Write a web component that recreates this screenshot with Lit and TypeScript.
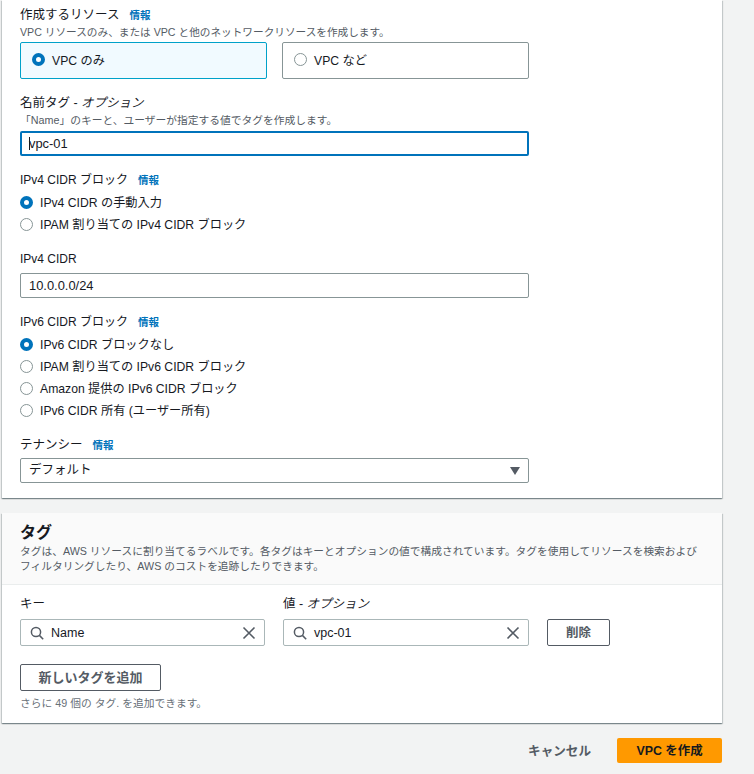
import { LitElement, html, css } from "lit";
import { customElement } from "lit/decorators.js";

const search = html`<svg class="ic" width="14" height="14" viewBox="0 0 14 14" fill="none" stroke="#545b64" stroke-width="1.5"><circle cx="6" cy="6" r="4.6"/><path d="M9.4 9.4 13.2 13.2"/></svg>`;
const cross = html`<svg class="ic" width="14" height="14" viewBox="0 0 14 14" fill="none" stroke="#545b64" stroke-width="1.6"><path d="M1.5 1.5l11 11M12.5 1.5l-11 11"/></svg>`;

@customElement("app-root")
export class AppRoot extends LitElement {
  static styles = css`
    :host { display: block; width: 754px; height: 774px; overflow: hidden; background: #f2f3f3; color: #16191f;
      font-family: "Liberation Sans", "Noto Sans CJK JP", sans-serif; font-size: 12.2px; }
    * { box-sizing: border-box; }
    .page { padding-left: 2px; width: 722px; }
    .card { background: #fff; width: 720px; box-shadow: 0 1px 1px 0 rgba(0,28,36,.3), 1px 1px 1px 0 rgba(0,28,36,.15), -1px 1px 1px 0 rgba(0,28,36,.15); }
    .main { height: 498px; padding: 7px 18px 0; }
    .label { height: 16px; line-height: 16px; display: flex; gap: 10px; white-space: nowrap; font-size: 12.5px; }
    .label.lat { font-size: 12px; }
    .label i { font-style: italic; }
    .info { color: #0073bb; font-size: 10.5px; font-weight: 700; }
    .desc { margin-top: 1px; height: 16px; line-height: 16px; font-size: 10.75px; color: #545b64; white-space: nowrap; }
    .desc.first { font-size: 10.65px; }
    .tiles { display: flex; gap: 15px; width: 509px; margin-top: 2px; }
    .tile { flex: 1; height: 37px; padding-bottom: 2px; border: 1px solid #879596; border-radius: 2px; display: flex; align-items: center; gap: 7px; padding-left: 11px; }
    .tile.on { border-color: #00a1c9; background: #f1faff; }
    .radio { width: 13px; height: 13px; flex: none; border-radius: 50%; border: 1px solid #879596; background: #fff; }
    .radio.on { border: 4px solid #0073bb; }
    .input { width: 509px; height: 25px; line-height: 23px; border: 1px solid #879596; border-radius: 2px; background: #fff; padding-left: 8px; font-size: 12.9px; }
    .input.focus { border: 2px solid #0073bb; line-height: 21px; padding-left: 7px; margin-top: 3px; }
    .caret { display: inline-block; width: 1px; height: 13px; background: #16191f; vertical-align: -2px; margin-right: -1px; }
    .radios { display: flex; flex-direction: column; margin-top: 3px; }
    .opt { height: 22px; display: flex; align-items: center; gap: 7px; white-space: nowrap; }
    .select { display: flex; align-items: center; justify-content: space-between; padding-right: 8px; font-size: 12.5px; }
    .arrow { width: 0; height: 0; border-left: 5px solid transparent; border-right: 5px solid transparent; border-top: 8px solid #545b64; margin-top: 1px; }
    .m-name { margin-top: 16px; }
    .m-v4 { margin-top: 16px; }
    .m-v4c { margin-top: 16px; }
    .m-v6 { margin-top: 16px; }
    .m-ten { margin-top: 16px; }
    .gap-s { margin-top: 6px; }
    .gap-xs { margin-top: 5px; }
    .tags { margin-top: 15px; height: 210px; }
    .head { height: 72px; background: #fafafa; border-bottom: 1px solid #eaeded; padding: 9px 18px 0; }
    .head h2 { margin: 0; height: 21px; line-height: 21px; font-size: 16px; font-weight: 700; }
    .head p { margin: 1px 0 0; font-size: 10.73px; line-height: 14.5px; color: #545b64; width: 684px; }
    .body { padding: 11px 18px 0; }
    .cols { display: flex; align-items: flex-end; }
    .col { display: flex; flex-direction: column; gap: 7px; }
    .k { width: 245px; margin-right: 18px; }
    .v { width: 246px; margin-right: 18px; }
    .search { height: 27px; border: 1px solid #aab7b8; border-radius: 2px; display: flex; align-items: center; padding: 0 8px 0 9px; gap: 7px; font-size: 12.5px; }
    .search span { flex: 1; }
    .btn { height: 27px; padding-bottom: 3px; border: 1px solid #545b64; border-radius: 2px; background: #fff; font-weight: 700; color: #545b64; display: flex; align-items: center; justify-content: center; font-size: 12.5px; white-space: nowrap; }
    .del { width: 63px; }
    .add { width: 141px; margin-top: 18px; font-size: 13px; }
    .note { margin-top: 4px; height: 16px; line-height: 16px; font-size: 10.75px; color: #687078; white-space: nowrap; }
    .foot { display: flex; justify-content: flex-end; align-items: center; gap: 26px; margin-top: 15px; width: 720px; }
    .cancel { font-weight: 700; color: #545b64; font-size: 12.6px; padding-bottom: 2px; }
    .primary { width: 105px; height: 25px; padding-bottom: 2px; background: #ff9900; border-radius: 2px; display: flex; align-items: center; justify-content: center; font-weight: 700; font-size: 12.4px; color: #16191f; }
  `;

  private radio(text: string, on = false) {
    return html`<div class="opt"><span class="radio ${on ? "on" : ""}"></span>${text}</div>`;
  }

  render() {
    return html`<div class="page">
      <section class="card main">
        <div class="label">作成するリソース <span class="info">情報</span></div>
        <div class="desc first">VPC リソースのみ、または VPC と他のネットワークリソースを作成します。</div>
        <div class="tiles">
          <div class="tile on"><span class="radio on"></span>VPC のみ</div>
          <div class="tile"><span class="radio"></span>VPC など</div>
        </div>
        <div class="label m-name"><span>名前タグ - <i>オプション</i></span></div>
        <div class="desc">「Name」のキーと、ユーザーが指定する値でタグを作成します。</div>
        <div class="input focus"><span class="caret"></span>vpc-01</div>
        <div class="label lat m-v4">IPv4 CIDR ブロック <span class="info">情報</span></div>
        <div class="radios">
          ${this.radio("IPv4 CIDR の手動入力", true)}
          ${this.radio("IPAM 割り当ての IPv4 CIDR ブロック")}
        </div>
        <div class="label lat m-v4c">IPv4 CIDR</div>
        <div class="input gap-s">10.0.0.0/24</div>
        <div class="label lat m-v6">IPv6 CIDR ブロック <span class="info">情報</span></div>
        <div class="radios">
          ${this.radio("IPv6 CIDR ブロックなし", true)}
          ${this.radio("IPAM 割り当ての IPv6 CIDR ブロック")}
          ${this.radio("Amazon 提供の IPv6 CIDR ブロック")}
          ${this.radio("IPv6 CIDR 所有 (ユーザー所有)")}
        </div>
        <div class="label m-ten">テナンシー <span class="info">情報</span></div>
        <div class="input select gap-xs"><span>デフォルト</span><span class="arrow"></span></div>
      </section>
      <section class="card tags">
        <div class="head">
          <h2>タグ</h2>
          <p>タグは、AWS リソースに割り当てるラベルです。各タグはキーとオプションの値で構成されています。タグを使用してリソースを検索およびフィルタリングしたり、AWS のコストを追跡したりできます。</p>
        </div>
        <div class="body">
          <div class="cols">
            <div class="col k"><div class="label">キー</div><div class="search">${search}<span>Name</span>${cross}</div></div>
            <div class="col v"><div class="label"><span>値 - <i>オプション</i></span></div><div class="search">${search}<span>vpc-01</span>${cross}</div></div>
            <div class="btn del">削除</div>
          </div>
          <div class="btn add">新しいタグを追加</div>
          <div class="note">さらに 49 個の タグ. を追加できます。</div>
        </div>
      </section>
      <div class="foot"><span class="cancel">キャンセル</span><div class="primary">VPC を作成</div></div>
    </div>`;
  }
}
